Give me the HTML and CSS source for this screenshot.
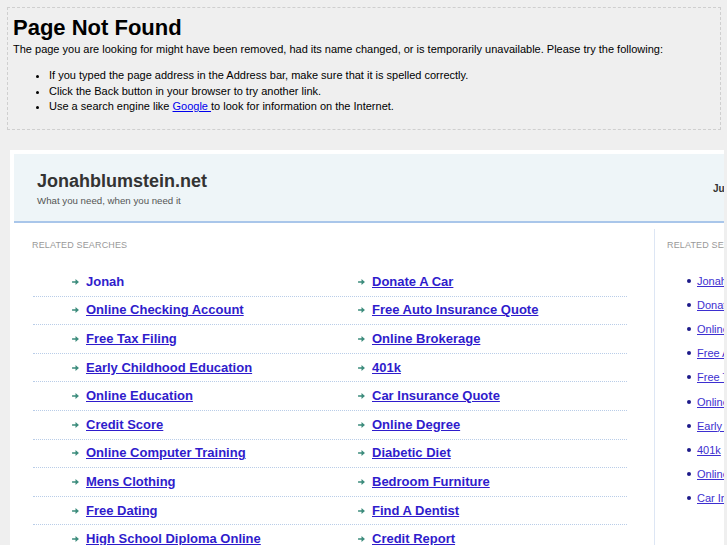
FILE: index.html
```html
<!DOCTYPE html>
<html>
<head>
<meta charset="utf-8">
<title>Page Not Found</title>
<link rel="stylesheet" href="styles.css">
</head>
<body>
<div class="notice">
  <h1 class="notice-title">Page Not Found</h1>
  <p class="notice-text">The page you are looking for might have been removed, had its name changed, or is temporarily unavailable. Please try the following:</p>
  <ul class="notice-list">
    <li>If you typed the page address in the Address bar, make sure that it is spelled correctly.</li>
    <li>Click the Back button in your browser to try another link.</li>
    <li>Use a search engine like <a href="#" class="notice-link">Google </a> to look for information on the Internet.</li>
  </ul>
</div>

<div class="clip">
  <div class="frame">
    <div class="header">
      <div class="brand">
        <div class="brand-name">Jonahblumstein.net</div>
        <div class="brand-tag">What you need, when you need it</div>
      </div>
      <div class="header-date">June 2011</div>
    </div>
    <div class="content">
      <div class="main">
        <div class="label">Related Searches</div>
        <div class="links">
          <div class="row"><a class="item plain" href="#"><svg class="arrow" viewBox="0 0 8 7"><path d="M0 2.5h4V0l4 3.5L4 7V4.5H0z"/></svg>Jonah</a><a class="item" href="#"><svg class="arrow" viewBox="0 0 8 7"><path d="M0 2.5h4V0l4 3.5L4 7V4.5H0z"/></svg><span>Donate A Car</span></a></div>
          <div class="row"><a class="item" href="#"><svg class="arrow" viewBox="0 0 8 7"><path d="M0 2.5h4V0l4 3.5L4 7V4.5H0z"/></svg><span>Online Checking Account</span></a><a class="item" href="#"><svg class="arrow" viewBox="0 0 8 7"><path d="M0 2.5h4V0l4 3.5L4 7V4.5H0z"/></svg><span>Free Auto Insurance Quote</span></a></div>
          <div class="row"><a class="item" href="#"><svg class="arrow" viewBox="0 0 8 7"><path d="M0 2.5h4V0l4 3.5L4 7V4.5H0z"/></svg><span>Free Tax Filing</span></a><a class="item" href="#"><svg class="arrow" viewBox="0 0 8 7"><path d="M0 2.5h4V0l4 3.5L4 7V4.5H0z"/></svg><span>Online Brokerage</span></a></div>
          <div class="row"><a class="item" href="#"><svg class="arrow" viewBox="0 0 8 7"><path d="M0 2.5h4V0l4 3.5L4 7V4.5H0z"/></svg><span>Early Childhood Education</span></a><a class="item" href="#"><svg class="arrow" viewBox="0 0 8 7"><path d="M0 2.5h4V0l4 3.5L4 7V4.5H0z"/></svg><span>401k</span></a></div>
          <div class="row"><a class="item" href="#"><svg class="arrow" viewBox="0 0 8 7"><path d="M0 2.5h4V0l4 3.5L4 7V4.5H0z"/></svg><span>Online Education</span></a><a class="item" href="#"><svg class="arrow" viewBox="0 0 8 7"><path d="M0 2.5h4V0l4 3.5L4 7V4.5H0z"/></svg><span>Car Insurance Quote</span></a></div>
          <div class="row"><a class="item" href="#"><svg class="arrow" viewBox="0 0 8 7"><path d="M0 2.5h4V0l4 3.5L4 7V4.5H0z"/></svg><span>Credit Score</span></a><a class="item" href="#"><svg class="arrow" viewBox="0 0 8 7"><path d="M0 2.5h4V0l4 3.5L4 7V4.5H0z"/></svg><span>Online Degree</span></a></div>
          <div class="row"><a class="item" href="#"><svg class="arrow" viewBox="0 0 8 7"><path d="M0 2.5h4V0l4 3.5L4 7V4.5H0z"/></svg><span>Online Computer Training</span></a><a class="item" href="#"><svg class="arrow" viewBox="0 0 8 7"><path d="M0 2.5h4V0l4 3.5L4 7V4.5H0z"/></svg><span>Diabetic Diet</span></a></div>
          <div class="row"><a class="item" href="#"><svg class="arrow" viewBox="0 0 8 7"><path d="M0 2.5h4V0l4 3.5L4 7V4.5H0z"/></svg><span>Mens Clothing</span></a><a class="item" href="#"><svg class="arrow" viewBox="0 0 8 7"><path d="M0 2.5h4V0l4 3.5L4 7V4.5H0z"/></svg><span>Bedroom Furniture</span></a></div>
          <div class="row"><a class="item" href="#"><svg class="arrow" viewBox="0 0 8 7"><path d="M0 2.5h4V0l4 3.5L4 7V4.5H0z"/></svg><span>Free Dating</span></a><a class="item" href="#"><svg class="arrow" viewBox="0 0 8 7"><path d="M0 2.5h4V0l4 3.5L4 7V4.5H0z"/></svg><span>Find A Dentist</span></a></div>
          <div class="row"><a class="item" href="#"><svg class="arrow" viewBox="0 0 8 7"><path d="M0 2.5h4V0l4 3.5L4 7V4.5H0z"/></svg><span>High School Diploma Online</span></a><a class="item" href="#"><svg class="arrow" viewBox="0 0 8 7"><path d="M0 2.5h4V0l4 3.5L4 7V4.5H0z"/></svg><span>Credit Report</span></a></div>
        </div>
      </div>
      <div class="side">
        <div class="label">Related Searches</div>
        <ul class="side-list">
          <li><a href="#">Jonah</a></li>
          <li><a href="#">Donate A Car</a></li>
          <li><a href="#">Online Checking Account</a></li>
          <li><a href="#">Free Auto Insurance Quote</a></li>
          <li><a href="#">Free Tax Filing</a></li>
          <li><a href="#">Online Brokerage</a></li>
          <li><a href="#">Early Childhood Education</a></li>
          <li><a href="#">401k</a></li>
          <li><a href="#">Online Education</a></li>
          <li><a href="#">Car Insurance Quote</a></li>
        </ul>
      </div>
    </div>
  </div>
</div>
</body>
</html>
```
FILE: styles.css
```css
html, body {
  margin: 0;
  padding: 0;
}
body {
  background: #efefef;
  font-family: "Liberation Sans", Arial, sans-serif;
  color: #000;
  height: 545px;
  overflow: hidden;
}
.notice {
  margin: 7px 6px 0 7px;
  border: 1px dashed #cfcfcf;
  padding: 7px 5px 12px 5px;
  height: 102px;
}
.notice-title {
  margin: 0;
  font-size: 22px;
  line-height: 25px;
  font-weight: bold;
}
.notice-text {
  margin: 2px 0 0 0;
  font-size: 11px;
  line-height: 14px;
}
.notice-list {
  margin: 12px 0 0 0;
  padding-left: 36px;
  font-size: 11px;
  line-height: 15.5px;
}
.notice-link {
  color: #0000ee;
}
.clip {
  margin: 20px 3px 0 10px;
  overflow: hidden;
  background: #fff;
  height: 400px;
}
.frame {
  width: 950px;
  padding: 4px;
  background: #fff;
}
.header {
  background: #eef5f8;
  border-bottom: 2px solid #a9c6ea;
  height: 67px;
  display: grid;
  grid-template-columns: 676px 1fr;
  padding-left: 23px;
  align-items: center;
}
.brand {
  padding-top: 1px;
}
.brand-name {
  font-size: 18px;
  font-weight: bold;
  color: #333;
  line-height: 22px;
}
.brand-tag {
  font-size: 9.7px;
  color: #555;
  line-height: 12px;
  margin-top: 3px;
}
.header-date {
  font-size: 10px;
  font-weight: bold;
  color: #333;
  white-space: nowrap;
  padding-top: 1px;
}
.content {
  display: flex;
  align-items: flex-start;
}
.main {
  width: 640px;
  flex: none;
  padding: 16px 0 0 18px;
  box-sizing: border-box;
}
.label {
  font-size: 9px;
  line-height: 12px;
  color: #999;
  text-transform: uppercase;
  letter-spacing: 0.15px;
}
.links {
  margin-top: 17px;
  width: 594px;
  margin-left: 1px;
}
.row {
  display: grid;
  grid-template-columns: 286px 1fr;
  padding-left: 39px;
  height: 27.6px;
  align-items: center;
  border-bottom: 1px dotted #b9cde8;
}
.item {
  display: flex;
  align-items: center;
  color: #2f1ccc;
  font-size: 13px;
  font-weight: bold;
  line-height: 16px;
  text-decoration: none;
}
.item span {
  text-decoration: underline;
}
.arrow {
  width: 7px;
  height: 6px;
  fill: #3c8c7c;
  margin-right: 7px;
  flex: none;
}
.side {
  flex: 1;
  border-left: 1px solid #dde6f4;
  margin-top: 6px;
  padding: 10px 0 0 12px;
  height: 330px;
}
.side-list {
  list-style: none;
  margin: 18px 0 0 0;
  padding: 0 0 0 20px;
}
.side-list li {
  display: flex;
  align-items: center;
  height: 24.1px;
  font-size: 11px;
  white-space: nowrap;
}
.side-list li::before {
  content: "";
  width: 4px;
  height: 4px;
  border-radius: 50%;
  background: #1d1a8a;
  margin-right: 6px;
  flex: none;
}
.side-list a {
  color: #3d2fd0;
}
```
